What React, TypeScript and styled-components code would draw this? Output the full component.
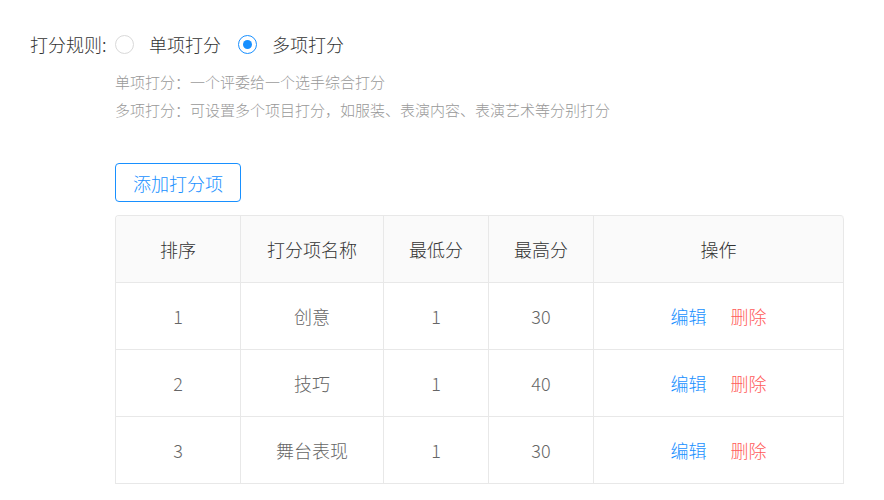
import * as React from 'react'
import styled, { createGlobalStyle } from 'styled-components'

const GlobalStyle = createGlobalStyle`
	body {
		margin: 0;
		background: #fff;
		font-family: "Noto Sans CJK SC", "Noto Sans", sans-serif;
		font-weight: 300;
	}
`

interface IItem {
	order: number
	name: string
	min: number
	max: number
}

const items: IItem[] = [
	{ order: 1, name: '创意', min: 1, max: 30 },
	{ order: 2, name: '技巧', min: 1, max: 40 },
	{ order: 3, name: '舞台表现', min: 1, max: 30 },
]

const columns = ['排序', '打分项名称', '最低分', '最高分', '操作']

export default function App() {
	const [mode, setMode] = React.useState<'single' | 'multi'>('multi')

	return (
		<Page>
			<GlobalStyle />
			<RuleRow>
				<Label>打分规则:</Label>
				<RadioGroup>
					<RadioItem onClick={() => setMode('single')}>
						<RadioCircle checked={mode === 'single'} />
						<RadioText>单项打分</RadioText>
					</RadioItem>
					<RadioItem onClick={() => setMode('multi')}>
						<RadioCircle checked={mode === 'multi'} />
						<RadioText>多项打分</RadioText>
					</RadioItem>
				</RadioGroup>
			</RuleRow>
			<Content>
				<Hints>
					<Hint>单项打分：一个评委给一个选手综合打分</Hint>
					<Hint>多项打分：可设置多个项目打分，如服装、表演内容、表演艺术等分别打分</Hint>
				</Hints>
				<AddButton>添加打分项</AddButton>
				<Table>
					<colgroup>
						<col style={{ width: 125 }} />
						<col style={{ width: 143 }} />
						<col style={{ width: 105 }} />
						<col style={{ width: 105 }} />
						<col />
					</colgroup>
					<thead>
						<tr>
							{columns.map((c) => (
								<Th key={c}>{c}</Th>
							))}
						</tr>
					</thead>
					<tbody>
						{items.map((item) => (
							<tr key={item.order}>
								<Td>{item.order}</Td>
								<Td>{item.name}</Td>
								<Td>{item.min}</Td>
								<Td>{item.max}</Td>
								<Td>
									<Actions>
										<ActionLink>编辑</ActionLink>
										<ActionLink danger>删除</ActionLink>
									</Actions>
								</Td>
							</tr>
						))}
					</tbody>
				</Table>
			</Content>
		</Page>
	)
}

interface IRadio {
	checked?: boolean
}

interface IAction {
	danger?: boolean
}

const Page = styled.div`
	padding: 29px 0 0 30px;
	width: 814px;
`

const RuleRow = styled.div`
	display: flex;
	align-items: center;
	height: 30px;
`

const Label = styled.div`
	width: 85px;
	font-size: 18px;
	color: #333;
`

const RadioGroup = styled.div`
	display: flex;
	align-items: center;
	gap: 17px;
`

const RadioItem = styled.label`
	display: flex;
	align-items: center;
	gap: 15px;
	cursor: pointer;
`

const RadioCircle = styled.span<IRadio>`
	box-sizing: border-box;
	width: 19px;
	height: 19px;
	border-radius: 50%;
	border: 1px solid ${(p) => (p.checked ? '#1890ff' : '#d9d9d9')};
	position: relative;
	background: #fff;

	&::after {
		content: '';
		display: ${(p) => (p.checked ? 'block' : 'none')};
		position: absolute;
		left: 4px;
		top: 4px;
		width: 9px;
		height: 9px;
		border-radius: 50%;
		background: #1890ff;
	}
`

const RadioText = styled.span`
	font-size: 18px;
	color: #333;
`

const Content = styled.div`
	padding-left: 85px;
`

const Hints = styled.div`
	padding-top: 13px;
	display: flex;
	flex-direction: column;
	gap: 8px;
`

const Hint = styled.div`
	font-size: 15px;
	line-height: 20px;
	color: #999;
`

const AddButton = styled.button`
	margin-top: 43px;
	box-sizing: border-box;
	width: 126px;
	height: 39px;
	border: 1px solid #1890ff;
	border-radius: 4px;
	background: #fff;
	color: #1890ff;
	font-family: inherit;
	font-weight: inherit;
	font-size: 18px;
	padding: 0;
	cursor: pointer;
`

const Table = styled.table`
	margin-top: 13px;
	width: 729px;
	border-collapse: separate;
	border-spacing: 0;
	table-layout: fixed;
	border-top: 1px solid #e8e8e8;
	border-left: 1px solid #e8e8e8;
	border-radius: 4px 4px 0 0;
	overflow: hidden;
`

const Th = styled.th`
	height: 66px;
	padding: 0;
	background: #fafafa;
	font-weight: inherit;
	font-size: 18px;
	color: #333;
	text-align: center;
	border-right: 1px solid #e8e8e8;
	border-bottom: 1px solid #e8e8e8;

	&:last-child {
		border-top-right-radius: 4px;
	}
`

const Td = styled.td`
	height: 66px;
	padding: 0;
	font-size: 18px;
	color: #666;
	text-align: center;
	border-right: 1px solid #e8e8e8;
	border-bottom: 1px solid #e8e8e8;
`

const Actions = styled.div`
	display: flex;
	justify-content: center;
	gap: 24px;
`

const ActionLink = styled.a<IAction>`
	font-size: 18px;
	color: ${(p) => (p.danger ? '#ff5b5b' : '#1890ff')};
	cursor: pointer;
`
